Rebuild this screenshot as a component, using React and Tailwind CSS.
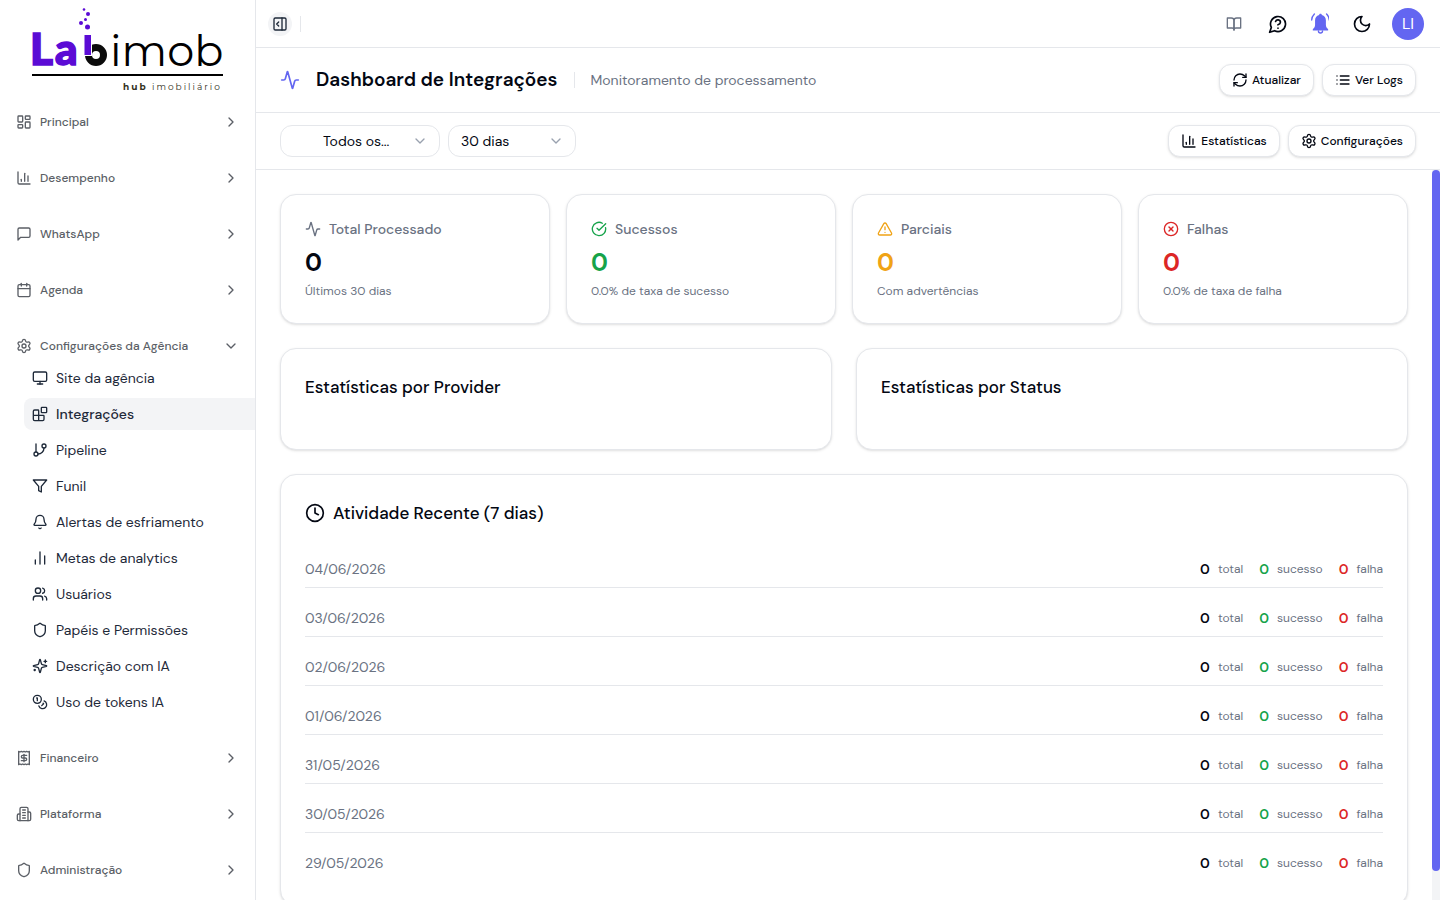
import React from "react";
import {
  Activity,
  Bell,
  Blocks,
  Calendar,
  ChartColumn,
  ChartNoAxesColumn,
  ChevronDown,
  ChevronRight,
  CircleCheckBig,
  CircleX,
  Clock,
  Coins,
  GitBranch,
  LayoutDashboard,
  Monitor,
  PanelRightOpen,
  RefreshCw,
  Settings,
  Shield,
  TriangleAlert,
  Users,
} from "lucide-react";

const Icon = ({ children, className = "size-4" }) => (
  <svg
    viewBox="0 0 24 24"
    fill="none"
    stroke="currentColor"
    strokeWidth="2"
    strokeLinecap="round"
    strokeLinejoin="round"
    className={className}
    aria-hidden="true"
  >
    {children}
  </svg>
);

const Message = (props) => (
  <Icon {...props}>
    <path d="M21 15a2 2 0 0 1-2 2H7l-4 4V5a2 2 0 0 1 2-2h14a2 2 0 0 1 2 2z" />
  </Icon>
);

const Funnel = (props) => (
  <Icon {...props}>
    <polygon points="22 3 2 3 10 12.46 10 19 14 21 14 12.46 22 3" />
  </Icon>
);

const Sparkles = (props) => (
  <Icon {...props}>
    <path d="M9.937 15.5A2 2 0 0 0 8.5 14.063l-6.135-1.582a.5.5 0 0 1 0-.962L8.5 9.936A2 2 0 0 0 9.937 8.5l1.582-6.135a.5.5 0 0 1 .963 0L14.063 8.5A2 2 0 0 0 15.5 9.937l6.135 1.581a.5.5 0 0 1 0 .964L15.5 14.063a2 2 0 0 0-1.437 1.437l-1.582 6.135a.5.5 0 0 1-.963 0z" />
    <path d="M20 3v4" />
    <path d="M22 5h-4" />
    <path d="M4 17v2" />
    <path d="M5 18H3" />
  </Icon>
);

const Receipt = (props) => (
  <Icon {...props}>
    <path d="M4 2v20l2-1 2 1 2-1 2 1 2-1 2 1 2-1 2 1V2l-2 1-2-1-2 1-2-1-2 1-2-1-2 1Z" />
    <path d="M16 8h-6a2 2 0 1 0 0 4h4a2 2 0 1 1 0 4H8" />
    <path d="M12 17.5v-11" />
  </Icon>
);

const Building = (props) => (
  <Icon {...props}>
    <path d="M6 22V4a2 2 0 0 1 2-2h8a2 2 0 0 1 2 2v18Z" />
    <path d="M6 12H4a2 2 0 0 0-2 2v6a2 2 0 0 0 2 2h2" />
    <path d="M18 9h2a2 2 0 0 1 2 2v9a2 2 0 0 1-2 2h-2" />
    <path d="M10 6h4" />
    <path d="M10 10h4" />
    <path d="M10 14h4" />
    <path d="M10 18h4" />
  </Icon>
);

const ListIcon = (props) => (
  <Icon {...props}>
    <path d="M8 6h13" />
    <path d="M8 12h13" />
    <path d="M8 18h13" />
    <path d="M3 6h.01" />
    <path d="M3 12h.01" />
    <path d="M3 18h.01" />
  </Icon>
);

const Book = (props) => (
  <Icon {...props}>
    <path d="M2 3h6a4 4 0 0 1 4 4v14a3 3 0 0 0-3-3H2z" />
    <path d="M22 3h-6a4 4 0 0 0-4 4v14a3 3 0 0 1 3-3h7z" />
  </Icon>
);

const Help = (props) => (
  <Icon {...props}>
    <path d="M7.9 20A9 9 0 1 0 4 16.1L2 22Z" />
    <path d="M9.09 9a3 3 0 0 1 5.83 1c0 2-3 3-3 3" />
    <path d="M12 17h.01" />
  </Icon>
);

const Moon = (props) => (
  <Icon {...props}>
    <path d="M12 3a6 6 0 0 0 9 9 9 9 0 1 1-9-9Z" />
  </Icon>
);

const BellRinging = ({ className }) => (
  <svg viewBox="0 0 56 62" className={className} aria-hidden="true">
    <path
      d="M28 2c3 0 4 2 4 4 8 2 12 8 12 16v13c0 6 2 9 6 12 2 3 1 5-2 5H8c-3 0-4-2-2-5 4-3 6-6 6-12V22c0-8 4-14 12-16 0-2 1-4 4-4Z"
      fill="currentColor"
    />
    <path
      d="M22 53a6 6 0 0 0 12 0M10 3C5 8 2 13 2 21M46 3c5 5 8 10 8 18"
      fill="none"
      stroke="currentColor"
      strokeWidth="4"
      strokeLinecap="round"
    />
  </svg>
);

const Logo = () => (
  <svg
    viewBox="-4 0 200 84"
    className="w-50 font-[Montserrat,Inter,sans-serif]"
    role="img"
    aria-label="Labimob hub imobiliário"
  >
    <g fill="#5b0bd5">
      <circle cx="52" cy="1.5" r="1.3" />
      <circle cx="56" cy="6" r="2" />
      <circle cx="53.5" cy="11.5" r="1.5" />
      <circle cx="49" cy="15" r="2" />
      <circle cx="55.5" cy="19" r="2.5" />
      <g fontSize="44" stroke="#5b0bd5" strokeWidth="1.6" fontFamily="Lato, sans-serif" fontWeight="900">
        <text x="-2" y="57">
          L
        </text>
        <text x="23" y="57">
          a
        </text>
      </g>
    </g>
    <circle cx="64" cy="47" r="7.5" fill="none" stroke="#0b0b0b" strokeWidth="7" />
    <rect x="50" y="25" width="10" height="23" fill="#fff" />
    <rect x="52.5" y="27" width="6.5" height="20" fill="#5b0bd5" />
    <text x="78" y="58" fontSize="43" fontWeight="400" fill="#000">
      imob
    </text>
    <rect y="66" width="191" height="2" fill="#000" />
    <text x="91" y="82" fontSize="9" letterSpacing="2" fill="#33301c">
      <tspan fontWeight="700">hub</tspan> imobiliário
    </text>
  </svg>
);

const sections = [
  { label: "Principal", icon: LayoutDashboard },
  { label: "Desempenho", icon: ChartColumn },
  { label: "WhatsApp", icon: Message },
  { label: "Agenda", icon: Calendar },
  {
    label: "Configurações da Agência",
    icon: Settings,
    items: [
      { label: "Site da agência", icon: Monitor },
      { label: "Integrações", icon: Blocks, active: true },
      { label: "Pipeline", icon: GitBranch },
      { label: "Funil", icon: Funnel },
      { label: "Alertas de esfriamento", icon: Bell },
      { label: "Metas de analytics", icon: ChartNoAxesColumn },
      { label: "Usuários", icon: Users },
      { label: "Papéis e Permissões", icon: Shield },
      { label: "Descrição com IA", icon: Sparkles },
      { label: "Uso de tokens IA", icon: Coins },
    ],
  },
  { label: "Financeiro", icon: Receipt },
  { label: "Plataforma", icon: Building },
  { label: "Administração", icon: Shield },
];

const stats = [
  {
    label: "Total Processado",
    icon: Activity,
    note: "Últimos 30 dias",
    iconColor: "text-gray-500",
    color: "text-gray-950",
  },
  {
    label: "Sucessos",
    icon: CircleCheckBig,
    note: "0.0% de taxa de sucesso",
    iconColor: "text-[#16a34a]",
    color: "text-[#16a34a]",
  },
  {
    label: "Parciais",
    icon: TriangleAlert,
    note: "Com advertências",
    iconColor: "text-[#f0a316]",
    color: "text-[#f0a316]",
  },
  {
    label: "Falhas",
    icon: CircleX,
    note: "0.0% de taxa de falha",
    iconColor: "text-[#dc2626]",
    color: "text-[#dc2626]",
  },
];

const days = [
  "04/06/2026",
  "03/06/2026",
  "02/06/2026",
  "01/06/2026",
  "31/05/2026",
  "30/05/2026",
  "29/05/2026",
];

const Sidebar = () => (
  <aside className="flex w-64 shrink-0 flex-col overflow-hidden border-r border-gray-200">
    <a href="#" className="mx-auto block pt-2 pb-1.5">
      <Logo />
    </a>
    <nav className="flex flex-col gap-2">
      {sections.map(({ label, icon: SectionIcon, items }) => (
        <div key={label} className="p-2">
          <button
            type="button"
            aria-expanded={Boolean(items)}
            className="flex h-8 w-full items-center gap-2 px-2 text-xs font-medium text-[#5b5f66]"
          >
            <SectionIcon className="size-4" />
            <span className="flex-1 text-left">{label}</span>
            {items ? <ChevronDown className="size-4" /> : <ChevronRight className="size-4" />}
          </button>
          {items && (
            <ul className="-mr-2 ml-4 flex flex-col gap-1">
              {items.map(({ label: name, icon: ItemIcon, active }) => (
                <li key={name}>
                  <a
                    href="#"
                    className={
                      active
                        ? "flex h-8 items-center gap-2 rounded-l-lg bg-gray-100 px-2 text-sm font-medium text-gray-800"
                        : "flex h-8 items-center gap-2 px-2 text-sm text-gray-800"
                    }
                  >
                    <ItemIcon className="size-4" />
                    {name}
                  </a>
                </li>
              ))}
            </ul>
          )}
        </div>
      ))}
    </nav>
  </aside>
);

const IconButton = ({ label, className = "", children }) => (
  <button
    type="button"
    aria-label={label}
    className={`flex size-9 items-center justify-center ${className}`}
  >
    {children}
  </button>
);

const TopBar = () => (
  <header className="flex h-12 shrink-0 items-center border-b border-gray-200 px-4">
    <button
      type="button"
      aria-label="Recolher menu"
      className="-ml-1 flex size-6 items-center justify-center rounded-full bg-gray-100 text-gray-800"
    >
      <PanelRightOpen className="size-4" />
    </button>
    <span className="ml-2 h-4 w-px bg-gray-200" />
    <div className="ml-auto flex items-center gap-1.5 text-gray-950">
      <IconButton label="Documentação" className="mr-0.5 text-gray-500">
        <Book className="size-4" />
      </IconButton>
      <IconButton label="Ajuda">
        <Help className="size-5" />
      </IconButton>
      <IconButton label="Notificações" className="text-[#6366f1]">
        <BellRinging className="h-[21px]" />
      </IconButton>
      <IconButton label="Tema escuro">
        <Moon className="size-5" />
      </IconButton>
      <button
        type="button"
        className="ml-1.5 flex size-8 items-center justify-center rounded-full bg-[#6366f1] text-base text-white"
      >
        LI
      </button>
    </div>
  </header>
);

const OutlineButton = ({ icon: ButtonIcon, children }) => (
  <button
    type="button"
    className="flex h-8 items-center gap-1 rounded-xl border border-gray-200 bg-white px-3 text-xs font-medium text-gray-950 shadow-sm"
  >
    <ButtonIcon className="size-4" />
    {children}
  </button>
);

const Select = ({ label, option, className }) => (
  <div className="relative">
    <select
      aria-label={label}
      className={`h-8 appearance-none rounded-xl border border-gray-200 bg-white text-sm text-gray-950 ${className}`}
    >
      <option>{option}</option>
    </select>
    <ChevronDown className="pointer-events-none absolute top-2 right-3 size-4 text-gray-400" />
  </div>
);

const Panel = ({ className = "p-6", children }) => (
  <section className={`rounded-2xl border border-gray-200 bg-white shadow-sm ${className}`}>
    {children}
  </section>
);

const Count = ({ color, label }) => (
  <span className="flex items-center gap-2">
    <span className={`text-sm font-semibold ${color}`}>0</span>
    <span className="text-xs text-gray-500">{label}</span>
  </span>
);

const App = () => {
  return (
    <div className="flex h-screen bg-white font-['DM_Sans',Inter,sans-serif] text-gray-950">
      <Sidebar />
      <div className="flex min-w-0 flex-1 flex-col">
        <TopBar />
        <div className="flex items-center border-b border-gray-200 px-6 py-4">
          <Activity className="size-5 text-[#6366f1]" />
          <h1 className="ml-4 text-[19px] leading-7 font-semibold">Dashboard de Integrações</h1>
          <span className="mx-4 h-4 w-px bg-gray-200" />
          <p className="text-sm text-gray-500">Monitoramento de processamento</p>
          <div className="ml-auto flex gap-2">
            <OutlineButton icon={RefreshCw}>Atualizar</OutlineButton>
            <OutlineButton icon={ListIcon}>Ver Logs</OutlineButton>
          </div>
        </div>
        <div className="flex items-center gap-2 border-b border-gray-200 px-6 py-3">
          <Select label="Provider" option="Todos os..." className="w-40 pl-[42px]" />
          <Select label="Período" option="30 dias" className="w-32 pl-3" />
          <div className="ml-auto flex gap-2">
            <OutlineButton icon={ChartColumn}>Estatísticas</OutlineButton>
            <OutlineButton icon={Settings}>Configurações</OutlineButton>
          </div>
        </div>

        <div className="flex min-h-0 flex-1">
          <main className="min-w-0 flex-1 overflow-y-auto [scrollbar-width:none]">
            <div className="flex flex-col gap-6 p-6">
              <div className="grid grid-cols-4 gap-4">
                {stats.map(({ label, icon: StatIcon, note, iconColor, color }) => (
                  <Panel key={label}>
                    <div className="flex items-center gap-2">
                      <StatIcon className={`size-4 ${iconColor}`} />
                      <h2 className="text-sm font-medium text-gray-500">{label}</h2>
                    </div>
                    <p className={`mt-2 text-2xl font-bold ${color}`}>0</p>
                    <p className="mt-1 text-xs text-gray-500">{note}</p>
                  </Panel>
                ))}
              </div>

              <div className="grid grid-cols-2 gap-6">
                <Panel className="p-6 pb-12">
                  <h2 className="text-[17px] leading-7 font-medium">Estatísticas por Provider</h2>
                </Panel>
                <Panel className="p-6 pb-12">
                  <h2 className="text-[17px] leading-7 font-medium">Estatísticas por Status</h2>
                </Panel>
              </div>

              <Panel>
                <h2 className="flex items-center gap-2 text-[17px] leading-7 font-medium">
                  <Clock className="size-5" />
                  Atividade Recente (7 dias)
                </h2>
                <ul className="mt-6 flex flex-col gap-3">
                  {days.map((day) => (
                    <li
                      key={day}
                      className="flex items-center justify-between border-b border-gray-200 py-2 last:border-b-0"
                    >
                      <span className="text-sm text-gray-500">{day}</span>
                      <div className="flex items-center gap-4">
                        <Count color="text-gray-950" label="total" />
                        <Count color="text-[#16a34a]" label="sucesso" />
                        <Count color="text-[#dc2626]" label="falha" />
                      </div>
                    </li>
                  ))}
                </ul>
              </Panel>
            </div>
          </main>
          <div className="w-2 shrink-0 bg-gray-100" aria-hidden="true">
            <div className="h-[96%] rounded-full bg-[#6366f1]" />
          </div>
        </div>
      </div>
    </div>
  );
};

export default App;
